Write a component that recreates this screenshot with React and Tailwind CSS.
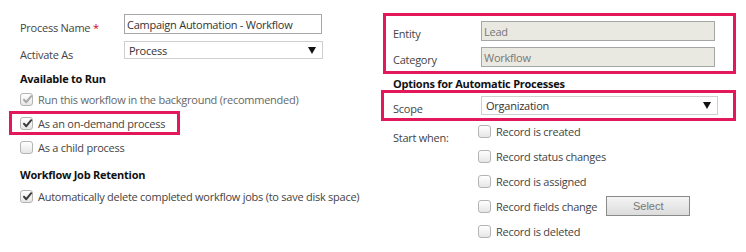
import React from "react";

const FONT = { fontFamily: '"Open Sans", "Noto Sans", sans-serif' };

function Check({ checked, disabled }) {
  return (
    <span className="relative inline-flex h-[13px] w-[13px] shrink-0 items-center justify-center rounded-[3px] border border-[#b4b4b4] bg-gradient-to-b from-[#ffffff] to-[#e6e6e6]">
      {checked && (
        <svg width="11" height="11" viewBox="0 0 11 11" className="absolute left-[1px] top-[0px]">
          <path
            d="M2 5.8 L4.3 8.2 L9.2 2.2"
            fill="none"
            stroke={disabled ? "#a8a8a8" : "#3c3c3c"}
            strokeWidth="2"
            strokeLinecap="round"
            strokeLinejoin="round"
          />
        </svg>
      )}
    </span>
  );
}

function CheckRow({ checked, disabled, label, className = "" }) {
  return (
    <div className={`flex items-center gap-[5px] ${className}`}>
      <Check checked={checked} disabled={disabled} />
      <span className={disabled ? "text-[#666]" : "text-[#444]"}>{label}</span>
    </div>
  );
}

function Arrow() {
  return (
    <svg width="8" height="7" viewBox="0 0 8 7">
      <path d="M0 0 H8 L4 7 Z" fill="#111" />
    </svg>
  );
}

export default function App() {
  return (
    <div
      className="flex h-[252px] w-[746px] bg-white text-[11px] leading-none tracking-[-0.25px] text-[#444]"
      style={FONT}
    >
      {/* Left column */}
      <div className="flex w-[383px] shrink-0 flex-col pl-[20px] pt-[14px]">
        <div className="flex h-[20px] items-center">
          <span className="mt-[6px] w-[104px]">
            Process Name <span className="text-[#d0021b]">*</span>
          </span>
          <div className="flex h-[20px] w-[198px] items-center border border-[#a6a6a6] px-[2px] text-[#333]">
            Campaign Automation - Workflow
          </div>
        </div>
        <div className="mt-[7px] flex h-[18px] items-center">
          <span className="mt-[8px] w-[104px]">Activate As</span>
          <div className="flex h-[18px] w-[199px] items-center justify-between border border-[#cfcfcf] pl-[4px] pr-[6px] text-[#333]">
            <span>Process</span>
            <Arrow />
          </div>
        </div>
        <div className="mt-[14px] font-bold text-[#111]">Available to Run</div>
        <CheckRow className="mt-[9px]" checked disabled label="Run this workflow in the background (recommended)" />
        <div className="-ml-[11px] mt-[5px] flex h-[24px] w-[171px] items-center border-[3px] border-[#e2185b] pl-[8px]">
          <div className="flex items-center gap-[5px]">
            <Check checked />
            <span>As an on-demand process</span>
          </div>
        </div>
        <CheckRow className="mt-[6px]" label="As a child process" />
        <div className="mt-[15px] font-bold text-[#111]">Workflow Job Retention</div>
        <CheckRow className="mt-[10px]" checked label="Automatically delete completed workflow jobs (to save disk space)" />
      </div>

      {/* Right column */}
      <div className="flex w-[353px] shrink-0 flex-col pt-[13px]">
        <div className="flex flex-col gap-[6px] border-[3px] border-[#e2185b] pb-[4px] pl-[7px] pr-[18px] pt-[5px]">
          <div className="flex items-center">
            <span className="mt-[4px] w-[88px]">Entity</span>
            <div className="flex h-[20px] flex-1 items-center border border-[#a6a6a6] bg-[#e9e8e1] px-[2px] text-[#777]">
              Lead
            </div>
          </div>
          <div className="flex items-center">
            <span className="mt-[5px] w-[88px]">Category</span>
            <div className="flex h-[20px] flex-1 items-center border border-[#a6a6a6] bg-[#e9e8e1] px-[2px] text-[#777]">
              Workflow
            </div>
          </div>
        </div>
        <div className="ml-[10px] mt-[4px] font-bold text-[#111]">Options for Automatic Processes</div>
        <div className="-ml-[2px] mt-[1px] flex h-[31px] items-center border-[3px] border-[#e2185b] pl-[9px] pr-[15px]">
          <span className="mt-[6px] w-[88px]">Scope</span>
          <div className="flex h-[19px] flex-1 items-center justify-between border border-[#cfcfcf] pl-[4px] pr-[6px] text-[#333]">
            <span>Organization</span>
            <Arrow />
          </div>
        </div>
        <div className="ml-[10px] mt-[-2px] flex">
          <span className="mt-[13px] w-[85px]">Start when:</span>
          <div className="flex flex-col">
            <CheckRow className="h-[24px]" label="Record is created" />
            <CheckRow className="mt-[1px] h-[24px]" label="Record status changes" />
            <CheckRow className="mt-[1px] h-[24px]" label="Record is assigned" />
            <div className="mt-[1px] flex h-[24px] items-center">
              <CheckRow label="Record fields change" />
              <button className="ml-[9px] h-[20px] w-[84px] border border-[#8a8a8a] bg-gradient-to-b from-[#f4f4f4] to-[#dcdcdc] text-[11px] tracking-normal text-[#777]" style={{ fontFamily: '"Liberation Sans", Arial, sans-serif' }}>
                Select
              </button>
            </div>
            <CheckRow className="mt-[1px] h-[24px]" label="Record is deleted" />
          </div>
        </div>
      </div>
    </div>
  );
}
